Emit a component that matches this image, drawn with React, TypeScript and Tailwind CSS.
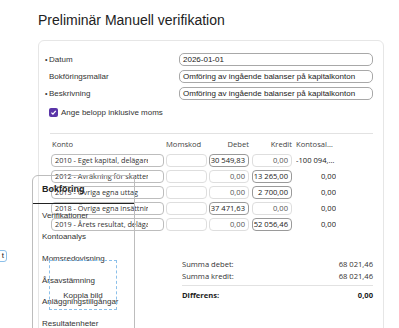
import React from 'react'

interface Row {
  konto: string
  debet: string
  kredit: string
  saldo: string
  debetSet?: boolean
  kreditSet?: boolean
}

const rows: Row[] = [
  { konto: '2010 - Eget kapital, delägare', debet: '30 549,83', kredit: '0,00', saldo: '-100 094,00', debetSet: true },
  { konto: '2012 - Avräkning för skatter', debet: '0,00', kredit: '13 265,00', saldo: '0,00', kreditSet: true },
  { konto: '2013 - Övriga egna uttag', debet: '0,00', kredit: '2 700,00', saldo: '0,00', kreditSet: true },
  { konto: '2018 - Övriga egna insättningar', debet: '37 471,63', kredit: '0,00', saldo: '0,00', debetSet: true },
  { konto: '2019 - Årets resultat, delägare', debet: '0,00', kredit: '52 056,46', saldo: '0,00', kreditSet: true },
]

const menu = [
  'Verifikationer',
  'Kontoanalys',
  'Momsredovisning',
  'Årsavstämning',
  'Anläggningstillgångar',
  'Resultatenheter',
]

function FormRow({ label, value, required }: { label: string; value: string; required?: boolean }) {
  return (
    <div className="flex items-center h-[13px]">
      <div className="w-[134px] flex items-center text-[8px] text-[#333]">
        <span className="w-[4px] text-[7px] leading-none">{required ? '•' : ''}</span>
        <span>{label}</span>
      </div>
      <div className="flex-1 h-[13px] border border-[#a8a8a8] rounded-[5px] pl-[3px] text-[8px] leading-[11px] text-[#222] whitespace-nowrap overflow-hidden">
        {value}
      </div>
    </div>
  )
}

function Cell({ value, strong, className = '' }: { value: string; strong?: boolean; className?: string }) {
  return (
    <div
      className={`h-[13px] rounded-[4px] border text-right pr-[3px] text-[7.6px] leading-[11px] whitespace-nowrap overflow-hidden ${
        strong ? 'border-[#9a9a9a] text-[#222]' : 'border-[#dedede] text-[#555]'
      } ${className}`}
    >
      {value}
    </div>
  )
}

export default function App() {
  return (
    <div className="relative w-[399px] h-[328px] overflow-hidden bg-white font-['Liberation_Sans',sans-serif] text-[#333]">
      <div className="pl-[38px] pt-[12px]">
        <h1 className="text-[14px] leading-[17px] text-[#222]">Preliminär Manuell verifikation</h1>

        <div className="mt-[11px] w-[346px] h-[320px] rounded-[6px] border border-[#e6e6e6] pt-[12px] pl-[6px] pr-[10px]">
          <div className="flex flex-col gap-[4px]">
            <FormRow label="Datum" value="2026-01-01" required />
            <FormRow label="Bokföringsmallar" value="Omföring av ingående balanser på kapitalkonton" />
            <FormRow label="Beskrivning" value="Omföring av ingående balanser på kapitalkonton" required />
          </div>

          <div className="mt-[8px] ml-[4px] flex items-center h-[9px]">
            <div className="w-[9px] h-[9px] rounded-[2px] bg-[#5a35a8] flex items-center justify-center">
              <svg width="7" height="7" viewBox="0 0 10 10">
                <path d="M2 5.2 L4.2 7.4 L8.2 2.6" fill="none" stroke="white" strokeWidth="1.8" />
              </svg>
            </div>
            <span className="ml-[3px] text-[8px] text-[#333]">Ange belopp inklusive moms</span>
          </div>

          <div className="ml-[5px] font-['Open_Sans',sans-serif]">
            <div className="mt-[16px] border-t border-[#e2e2e2]" />

            <div className="mt-[6px] flex items-center h-[10px] text-[7.6px] text-[#444] pl-[1px]">
              <div className="w-[113px] pl-[1px]">Konto</div>
              <div className="ml-[2px] w-[41px]">Momskod</div>
              <div className="ml-[2px] w-[40px] text-right">Debet</div>
              <div className="ml-[3px] w-[40px] text-right">Kredit</div>
              <div className="ml-[4px] w-[40px] whitespace-nowrap overflow-hidden text-ellipsis">Kontosaldo</div>
            </div>

            <div className="mt-[4px] flex flex-col gap-[3px] pl-[1px]">
              {rows.map((r) => (
                <div key={r.konto} className="flex items-center">
                  <div className="w-[113px] h-[13px] rounded-[4px] border border-[#bdbdbd] pl-[3px] pr-[15px] text-[7.3px] leading-[11px] text-[#333]">
                    <div className="whitespace-nowrap overflow-hidden">{r.konto}</div>
                  </div>
                  <Cell value="" className="ml-[2px] w-[41px]" />
                  <Cell value={r.debet} strong={r.debetSet} className="ml-[2px] w-[40px]" />
                  <Cell value={r.kredit} strong={r.kreditSet} className="ml-[3px] w-[40px]" />
                  <div className="ml-[4px] w-[40px] text-right text-[7.6px] text-[#222] whitespace-nowrap overflow-hidden text-ellipsis">
                    {r.saldo}
                  </div>
                </div>
              ))}
            </div>

            <div className="mt-[28px] ml-[132px] text-[7.6px] text-[#333]">
              <div className="flex justify-between h-[12px] items-center">
                <span>Summa debet:</span>
                <span>68 021,46</span>
              </div>
              <div className="flex justify-between h-[12px] items-center">
                <span>Summa kredit:</span>
                <span>68 021,46</span>
              </div>
              <div className="mt-[2px] border-t border-[#e2e2e2]" />
              <div className="mt-[4px] flex justify-between h-[12px] items-center font-bold text-[#222]">
                <span>Differens:</span>
                <span>0,00</span>
              </div>
            </div>
          </div>
        </div>
      </div>

      {/* dropdown menu lying over the table */}
      <div className="absolute left-[32px] top-[175px] w-[103px] h-[170px] border border-[#bdbdbd] rounded-tl-[6px]">
        <div className="h-[28px] flex items-center pl-[9px] border-b border-[#222] text-[9px] font-bold text-[#222]">
          Bokföring
        </div>
        <div className="flex flex-col pl-[9px] pt-[1px]">
          {menu.map((m) => (
            <div key={m} className="h-[21.6px] flex items-center text-[8px] text-[#333] whitespace-nowrap">
              {m}
            </div>
          ))}
        </div>
      </div>

      <div className="absolute left-[49px] top-[260px] w-[68px] h-[50px] border border-dashed border-[#8cc0ea] flex items-end justify-center pb-[7px]">
        <span className="text-[8px] text-[#333] whitespace-nowrap">Koppla bild</span>
      </div>

      <div className="absolute left-[-22px] top-[250px] w-[29px] h-[12px] border border-[#8cc0ea] rounded-[3px] bg-white flex items-center justify-end pr-[2px] text-[8px] text-[#222]">
        t
      </div>
    </div>
  )
}
